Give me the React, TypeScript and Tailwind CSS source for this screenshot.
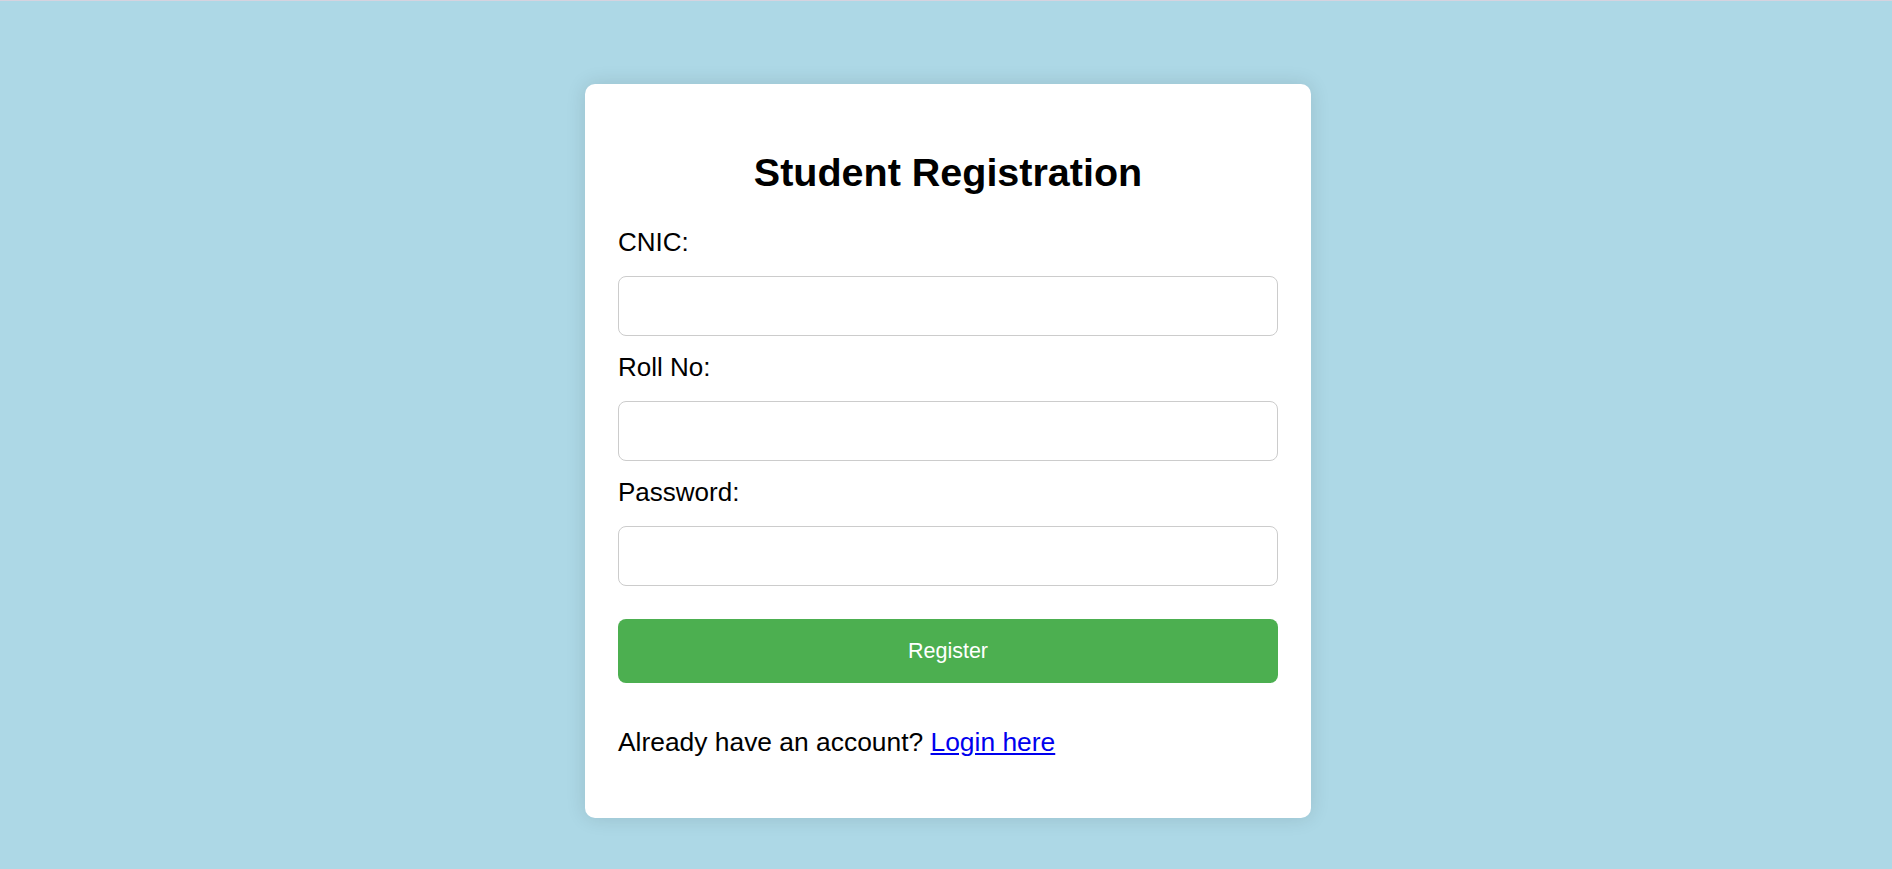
import React from "react";

const fields = [
  { id: "cnic", label: "CNIC:", type: "text" },
  { id: "roll", label: "Roll No:", type: "text" },
  { id: "password", label: "Password:", type: "password" },
];

const App = () => {
  return (
    <div className="min-h-screen bg-[#add8e6] font-['Liberation_Sans',Arial,sans-serif] text-black">
      {/* thin top strip */}
      <div className="h-px bg-[#d6d3df]" />

      <div className="flex justify-center pt-[83px] pb-10">
        <div className="ml-[4px] w-[726px] rounded-[10px] bg-white px-[33px] pt-[66px] pb-[61px] shadow-[0_0_20px_rgba(0,0,0,0.12)]">
          <h2 className="text-center text-[39.5px] leading-[44px] font-bold">
            Student Registration
          </h2>

          <form className="mt-[33px] flex flex-col" onSubmit={(e) => e.preventDefault()}>
            {fields.map((f, i) => (
              <div key={f.id} className={i > 0 ? "mt-[16px]" : ""}>
                <label htmlFor={f.id} className="block text-[26px] leading-[30px]">
                  {f.label}
                </label>
                <input
                  id={f.id}
                  type={f.type}
                  className="mt-[19px] block h-[60px] w-full rounded-[8px] border border-[#cccccc] bg-white px-4 text-[22px] outline-none"
                />
              </div>
            ))}

            <button
              type="submit"
              className="mt-[33px] h-[64px] w-full rounded-[8px] bg-[#4caf50] text-[21.5px] text-white"
            >
              Register
            </button>
          </form>

          <p className="mt-[44px] text-[26.4px] leading-[30px]">
            Already have an account?{" "}
            <a href="#" className="text-[#0000ee] underline">
              Login here
            </a>
          </p>
        </div>
      </div>
    </div>
  );
};

export default App;
